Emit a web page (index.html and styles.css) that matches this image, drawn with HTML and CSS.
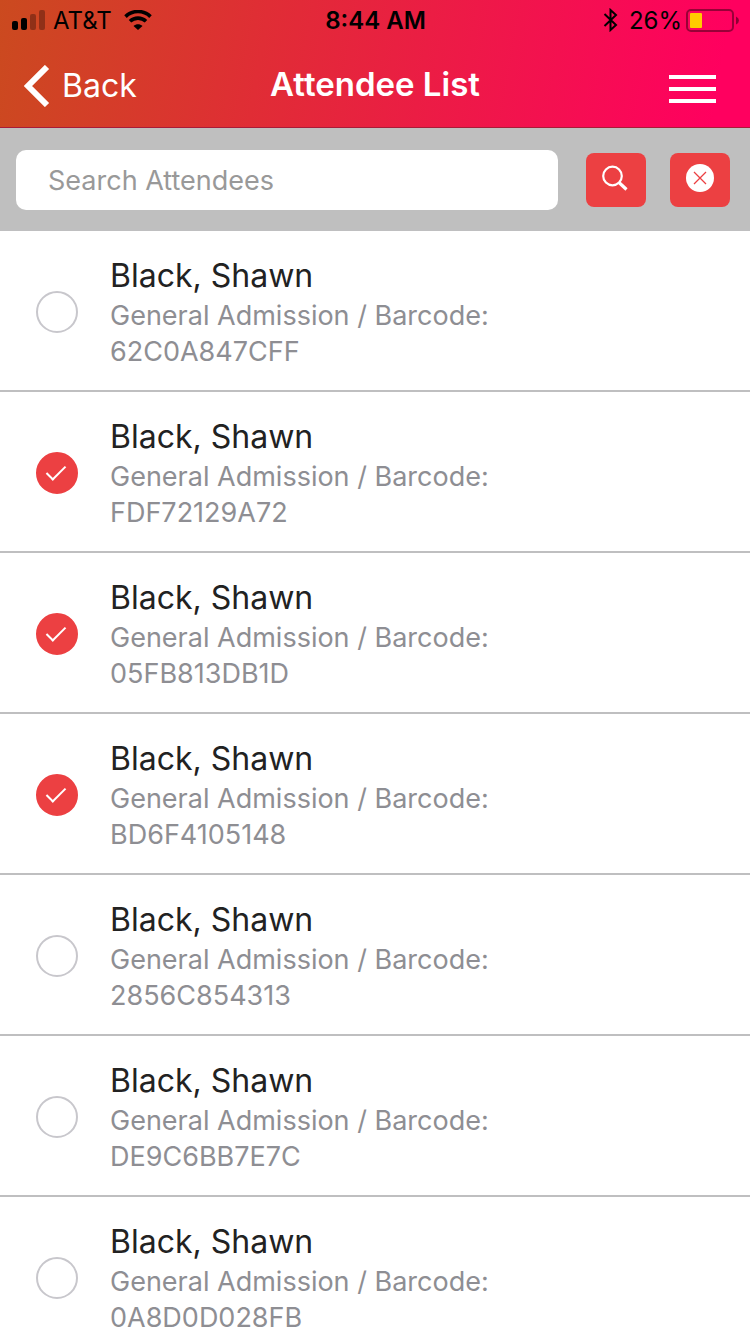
FILE: index.html
```html
<!DOCTYPE html>
<html lang="en">
<head>
    <meta charset="UTF-8">
    <meta name="viewport" content="width=device-width, initial-scale=1.0">
    <title>Attendee List</title>
    <link rel="stylesheet" href="styles.css">
</head>
<body>
    <!-- Header -->
    <header class="header">
        <div class="status">
            <div class="status-left">
                <svg class="signal" width="33" height="20" viewBox="0 0 33 20">
                    <rect x="0" y="11" width="6" height="9" rx="2"/>
                    <rect x="9" y="8" width="6" height="12" rx="2"/>
                    <rect x="18" y="4" width="6" height="16" rx="2" opacity=".3"/>
                    <rect x="27" y="0" width="6" height="20" rx="2" opacity=".3"/>
                </svg>
                <span>AT&amp;T</span>
                <svg class="wifi" width="28" height="20" viewBox="0 0 28 20">
                    <path d="M1.500 6.600C8.500-.2 19.500-.2 26.500 6.600M6 11.300C10.600 7 17.400 7 22 11.300" fill="none" stroke="#000" stroke-width="3.600"/>
                    <path d="M9.500 16C12 13.500 16 13.500 18.500 16L14 20Z"/>
                </svg>
            </div>
            <span class="time">8:44 AM</span>
            <div class="status-right">
                <svg class="bluetooth" width="16" height="24" viewBox="0 0 16 24">
                    <path d="M1.500 6L13 17L7.500 22V2L13 7L1.500 18" fill="none" stroke="#000" stroke-width="2"/>
                </svg>
                <span>26%</span>
                <svg class="battery" width="53" height="24" viewBox="0 0 53 24">
                    <rect x="1" y="2" width="46" height="21" rx="4" fill="none" stroke="#000" stroke-opacity=".4" stroke-width="2"/>
                    <rect x="4" y="5" width="12" height="15" rx="1" fill="#ffcc00"/>
                    <path d="M50 8.500Q53 10 53 12.500T50 16.500Z" opacity=".45"/>
                </svg>
            </div>
        </div>
        <nav class="navbar">
            <a class="back" href="#">
                <svg width="26" height="42" viewBox="0 0 26 42">
                    <path d="M23 2L4 21L23 40" fill="none" stroke="#fff" stroke-width="6"/>
                </svg>
                <span>Back</span>
            </a>
            <h1 class="title">Attendee List</h1>
            <button class="menu" type="button" aria-label="Menu">
                <span class="bar"></span>
                <span class="bar"></span>
                <span class="bar"></span>
            </button>
        </nav>
    </header>

    <!-- Search -->
    <form class="search">
        <input class="search-input" type="search" placeholder="Search Attendees" aria-label="Search Attendees">
        <button class="search-button" type="submit" aria-label="Search">
            <svg width="28" height="28" viewBox="0 0 28 28" fill="none" stroke="#fff">
                <circle cx="10.500" cy="12" r="9.300" stroke-width="2.200"/>
                <path d="M17 18.500L24.500 25.500" stroke-width="3.200"/>
            </svg>
        </button>
        <button class="search-button" type="reset" aria-label="Clear">
            <svg width="28" height="28" viewBox="0 0 28 28">
                <circle cx="14" cy="14" r="14" fill="#fff"/>
                <path d="M8 8L20 20M20 8L8 20" stroke="#ec4042" stroke-width="1.300"/>
            </svg>
        </button>
    </form>

    <!-- Attendees -->
    <ul class="attendees">
        <li><label class="attendee">
            <input class="check" type="checkbox">
            <span class="info">
                <span class="name">Black, Shawn</span>
                <span class="ticket">General Admission / Barcode:<br>62C0A847CFF</span>
            </span>
        </label></li>
        <li><label class="attendee">
            <input class="check" type="checkbox" checked>
            <span class="info">
                <span class="name">Black, Shawn</span>
                <span class="ticket">General Admission / Barcode:<br>FDF72129A72</span>
            </span>
        </label></li>
        <li><label class="attendee">
            <input class="check" type="checkbox" checked>
            <span class="info">
                <span class="name">Black, Shawn</span>
                <span class="ticket">General Admission / Barcode:<br>05FB813DB1D</span>
            </span>
        </label></li>
        <li><label class="attendee">
            <input class="check" type="checkbox" checked>
            <span class="info">
                <span class="name">Black, Shawn</span>
                <span class="ticket">General Admission / Barcode:<br>BD6F4105148</span>
            </span>
        </label></li>
        <li><label class="attendee">
            <input class="check" type="checkbox">
            <span class="info">
                <span class="name">Black, Shawn</span>
                <span class="ticket">General Admission / Barcode:<br>2856C854313</span>
            </span>
        </label></li>
        <li><label class="attendee">
            <input class="check" type="checkbox">
            <span class="info">
                <span class="name">Black, Shawn</span>
                <span class="ticket">General Admission / Barcode:<br>DE9C6BB7E7C</span>
            </span>
        </label></li>
        <li><label class="attendee">
            <input class="check" type="checkbox">
            <span class="info">
                <span class="name">Black, Shawn</span>
                <span class="ticket">General Admission / Barcode:<br>0A8D0D028FB</span>
            </span>
        </label></li>
    </ul>
</body>
</html>
```
FILE: styles.css
```css
* {
    box-sizing: border-box;
}

body {
    margin: 0;
    background-color: #fff;
    font-family: Inter, Roboto, sans-serif;
}

button {
    border: none;
    cursor: pointer;
}

/* Header */
.header {
    background: linear-gradient(100deg, #cb4a1f, #e02d35 35%, #ff005f 95%);
    border-bottom: 1px solid #a81c38;
}

/* Status bar */
.status {
    display: grid;
    grid-template-columns: 1fr auto 1fr;
    align-items: center;
    height: 40px;
    padding: 0 11px 0 12px;
    font-size: 24px;
}

.status-left,
.status-right {
    display: flex;
    align-items: center;
}

.status-left {
    gap: 8px;
}

.wifi {
    margin-left: 4px;
}

.status-right {
    justify-content: flex-end;
    gap: 4px;
}

.bluetooth {
    margin-right: 6px;
}

.time {
    font-weight: 600;
}

/* Navigation bar */
.navbar {
    display: grid;
    grid-template-columns: 1fr auto 1fr;
    align-items: center;
    height: 87px;
    padding: 0 24px;
}

.back {
    display: flex;
    align-items: center;
    gap: 12px;
    padding-top: 4px;
    color: #fff;
    font-size: 32px;
    text-decoration: none;
}

.title {
    margin: 0;
    color: #fff;
    font-size: 33px;
    font-weight: 600;
}

.menu {
    display: flex;
    flex-direction: column;
    gap: 8px;
    justify-self: end;
    margin: 10px 10px 0 0;
    padding: 0;
    background: none;
}

.bar {
    width: 47px;
    height: 4px;
    background-color: #fff;
}

/* Search bar */
.search {
    display: flex;
    align-items: center;
    gap: 24px;
    padding: 22px 20px 19px 16px;
    background-color: #bfbfbf;
}

.search-input {
    flex: 1;
    min-width: 0;
    height: 60px;
    margin-right: 4px;
    padding: 0 32px;
    border: none;
    border-radius: 10px;
    background-color: #fff;
    font-family: inherit;
    font-size: 27px;
    appearance: none;
}

.search-input::placeholder {
    color: #999;
}

.search-button {
    display: flex;
    justify-content: center;
    width: 60px;
    height: 54px;
    padding: 11px 0 0;
    border-radius: 8px;
    background-color: #ec4042;
}

/* Attendee list */
.attendees {
    margin: 0;
    padding: 0;
    list-style: none;
}

.attendee {
    display: flex;
    align-items: center;
    gap: 32px;
    padding: 23px 36px 20px;
    border-top: 2px solid #bfbfc0;
}

.check {
    display: flex;
    align-items: center;
    justify-content: center;
    flex-shrink: 0;
    width: 42px;
    height: 42px;
    margin: 0;
    border: 2px solid #c8c7cc;
    border-radius: 50%;
    appearance: none;
}

.check:checked {
    border-color: #ec4042;
    background-color: #ec4042;
}

.check:checked::after {
    content: "";
    width: 8px;
    height: 17px;
    margin: 0 2px 5px 0;
    border: solid #fff;
    border-width: 0 2px 2px 0;
    transform: rotate(45deg);
}

.name {
    display: block;
    color: #222;
    font-size: 32px;
    line-height: 44px;
}

.ticket {
    display: block;
    color: #8e8e93;
    font-size: 27px;
    line-height: 36px;
}
```
